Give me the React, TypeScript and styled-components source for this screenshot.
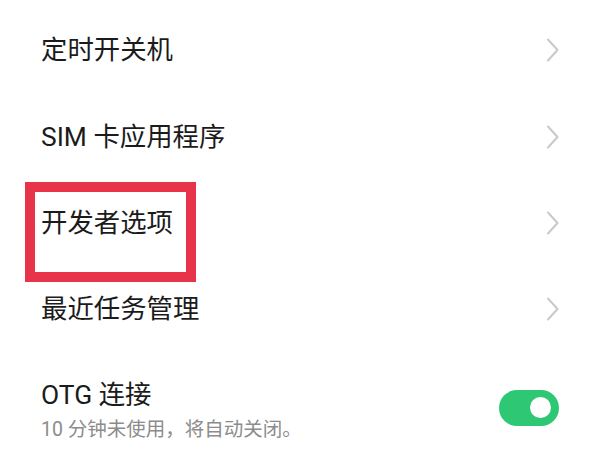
import React from "react";
import styled, { createGlobalStyle } from "styled-components";

const Global = createGlobalStyle`
  html, body { margin: 0; padding: 0; background: #ffffff; }
  body { font-family: Roboto, "Noto Sans CJK SC", sans-serif; }
`;

const List = styled.div`
  width: 600px;
  height: 450px;
  overflow: hidden;
  padding-top: 7px;
  box-sizing: border-box;
  display: flex;
  flex-direction: column;
  background: #ffffff;
`;

const Row = styled.div<{ $tall?: boolean }>`
  position: relative;
  display: flex;
  align-items: center;
  justify-content: space-between;
  height: ${(p) => (p.$tall ? "auto" : "86.4px")};
  padding: ${(p) => (p.$tall ? "25px 41px 0 41px" : "0 40px 0 41px")};
  box-sizing: border-box;
  flex-shrink: 0;
`;

const TextCol = styled.div`
  display: flex;
  flex-direction: column;
`;

const Title = styled.div`
  font-family: Roboto, "Noto Sans CJK SC", sans-serif;
  font-size: 26.4px;
  line-height: 34px;
  color: #1b1b1b;
  white-space: nowrap;
`;

const Sub = styled.div`
  font-family: Roboto, "Noto Sans CJK SC", sans-serif;
  font-size: 19.5px;
  line-height: 28px;
  margin-top: 4px;
  color: #8c8c8c;
  white-space: nowrap;
`;

const Highlight = styled.div`
  position: absolute;
  left: 25px;
  top: 2px;
  width: 171px;
  height: 100px;
  border: 10px solid #e8344a;
  box-sizing: border-box;
  pointer-events: none;
`;

const Chevron = () => (
  <svg width="14" height="24" viewBox="0 0 14 24" fill="none">
    <path d="M2 1.5 L11.5 12 L2 22.5" stroke="#c9c9c9" strokeWidth="2" strokeLinecap="round" strokeLinejoin="round" />
  </svg>
);

const Toggle = styled.div`
  width: 60px;
  height: 36px;
  border-radius: 18px;
  background: #2ec774;
  display: flex;
  align-items: center;
  justify-content: flex-end;
  padding-right: 8px;
  box-sizing: border-box;
  margin-top: -6px;
`;

const Knob = styled.div`
  width: 21px;
  height: 21px;
  border-radius: 50%;
  background: #ffffff;
`;

const items = ["定时开关机", "SIM 卡应用程序", "开发者选项", "最近任务管理"];

export default function App() {
  return (
    <>
      <Global />
      <List>
        {items.map((t, i) => (
          <Row key={t}>
            <Title>{t}</Title>
            <Chevron />
            {i === 2 && <Highlight />}
          </Row>
        ))}
        <Row $tall>
          <TextCol>
            <Title>OTG 连接</Title>
            <Sub>10 分钟未使用，将自动关闭。</Sub>
          </TextCol>
          <Toggle>
            <Knob />
          </Toggle>
        </Row>
      </List>
    </>
  );
}
